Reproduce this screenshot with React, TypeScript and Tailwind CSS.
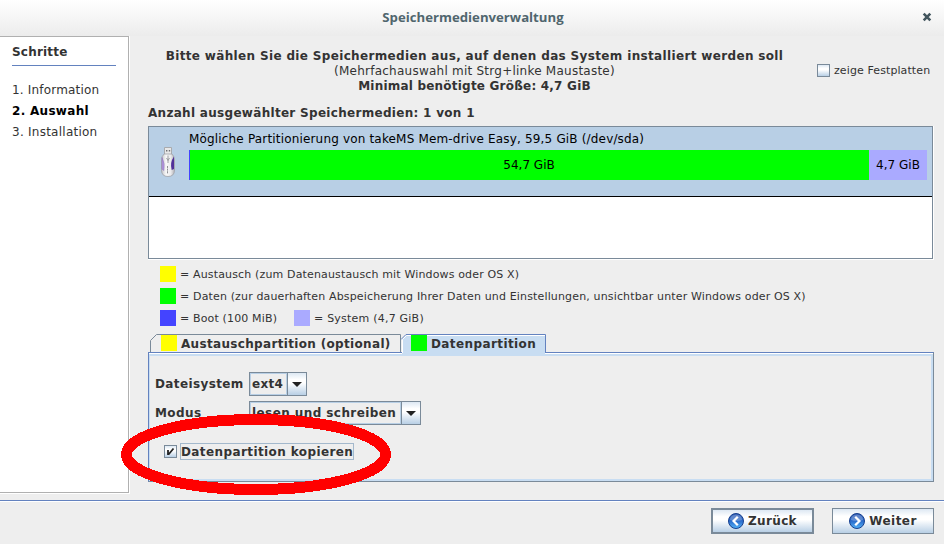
import React from 'react';

const metal = 'bg-[linear-gradient(to_bottom,#dde8f3_0%,#ffffff_30%,#ffffff_45%,#b8cfe5_100%)]';

function UsbStick() {
  return (
    <svg width="14" height="32" viewBox="0 0 14 32" className="shrink-0">
      <defs>
        <linearGradient id="usb" x1="0" x2="1" y1="0" y2="0">
          <stop offset="0" stopColor="#c4c4c9" />
          <stop offset="0.35" stopColor="#f8f8f8" />
          <stop offset="0.7" stopColor="#ececee" />
          <stop offset="1" stopColor="#b4b4ba" />
        </linearGradient>
      </defs>
      <path d="M3.500 1.500h7v8h-7z" fill="#e8e8e8" stroke="#a9abae" />
      <path d="M5 4h1.400v1.500H5zM7.800 4h1.400v1.500H7.800z" fill="#6e7074" />
      <path d="M3 8h8q2.500 2 2.500 7v9q0 6.500-6.500 6.500T.5 24v-9Q.5 10 3 8z" fill="url(#usb)" stroke="#a0a2a8" strokeWidth="0.8" />
      <path d="M1 11.500q3.200 6 1.800 13L1 23z" fill="#b79ae0" stroke="#8468b4" strokeWidth="0.5" />
      <path d="M13 10.500q-4.400 6-2.300 13.500L13 23z" fill="#51309a" />
      <path d="M7 9.500v7.500M5.500 12l1.500 2.500L8.500 12" fill="none" stroke="#96979c" strokeWidth="0.900" />
      <path d="M6.500 20v8" fill="none" stroke="#8f9095" strokeDasharray="2 .6" />
    </svg>
  );
}

function Arrow({ back }: { back?: boolean }) {
  return (
    <svg width="16" height="16" viewBox="0 0 16 16" className="shrink-0">
      <defs>
        <linearGradient id="ball" x1="0" x2="0" y1="0" y2="1">
          <stop offset="0" stopColor="#2c56ad" />
          <stop offset="0.5" stopColor="#2a6bcb" />
          <stop offset="1" stopColor="#55b4f8" />
        </linearGradient>
      </defs>
      <circle cx="8" cy="8" r="7.500" fill="url(#ball)" stroke="#17408f" />
      <path d="M2 7a6 5.500 0 0 1 12 0q-6 2-12 0z" fill="#ffffff" opacity="0.25" />
      <path d={back ? 'M9.800 3.800L5.600 8l4.200 4.200' : 'M6.200 3.800L10.400 8l-4.200 4.200'} fill="none" stroke="#fff" strokeWidth="2.300" />
    </svg>
  );
}

function Combo({ children, width, tracking }: { children: string; width: string; tracking: string }) {
  return (
    <div className={`flex h-6 border border-[#7a8a99] ${width}`}>
      <div className={`flex flex-1 items-center whitespace-nowrap border border-[#b8cfe5] pl-px ${tracking}`}>{children}</div>
      <div className={`flex w-[19px] items-center justify-center border-l border-[#7a8a99] ${metal}`}>
        <svg width="10" height="5" viewBox="0 0 10 5"><path d="M0 0h10L5 5z" fill="#222" /></svg>
      </div>
    </div>
  );
}

function Legend({ color, children }: { color: string; children: string }) {
  return (
    <div className="flex h-4 items-center gap-1 whitespace-nowrap">
      <span className={`size-4 ${color}`} />
      <span>{children}</span>
    </div>
  );
}

export default function App() {
  return (
    <div className="relative flex h-[544px] w-[944px] flex-col overflow-hidden bg-[#eeeeee] font-['DejaVu_Sans',sans-serif] text-[12px] leading-[15px] text-[#333333]">
      <header className="flex h-9 shrink-0 items-center bg-linear-to-b from-white to-[#ececec] pl-[24px] pr-3">
        <h1 className="flex-1 pb-px text-center font-['Open_Sans',sans-serif] text-[13.200px] font-bold text-[#50666e]">Speichermedienverwaltung</h1>
        <svg width="10" height="10" viewBox="0 0 10 10" className="mb-[2px]"><path d="M1.700 1.700l6.600 6.600M8.300 1.700L1.700 8.300" stroke="#43565e" strokeWidth="2.600" /></svg>
      </header>
      <div className="flex h-[458px] shrink-0">
        <aside className="w-[130px] border-b border-r border-white">
          <div className="h-[457px] border border-l-0 border-[#b0b0b0] bg-white pl-3 pr-3 pt-[8px]">
            <h2 className="h-[21px] border-b border-[#6382bf] font-bold tracking-[0.200px]">Schritte</h2>
            <ol className="mt-[14px] leading-[21px] tracking-[0.180px]">
              <li>1. Information</li>
              <li className="font-bold tracking-[0.300px] text-black">2. Auswahl</li>
              <li className="tracking-[0.250px]">3. Installation</li>
            </ol>
          </div>
        </aside>
        <main className="flex flex-1 flex-col pl-[18px] pr-[10px] pt-3">
          <div className="flex h-[45px]">
            <div className="w-[653px] whitespace-nowrap pt-px text-center">
              <p className="font-bold tracking-[0.345px]">Bitte wählen Sie die Speichermedien aus, auf denen das System installiert werden soll</p>
              <p className="tracking-[0.240px]">(Mehrfachauswahl mit Strg+linke Maustaste)</p>
              <p className="font-bold tracking-[0.210px]">Minimal benötigte Größe: 4,7 GiB</p>
            </div>
            <label className="ml-4 flex items-center gap-1 whitespace-nowrap text-[11px] tracking-[0.100px]">
              <span className={`size-[13px] border border-[#7a8a99] ${metal}`} />zeige Festplatten
            </label>
          </div>
          <p className="mt-[13px] font-bold tracking-[0.300px]">Anzahl ausgewählter Speichermedien: 1 von 1</p>
          <div className="mt-[5px] h-[134px] border-b border-r border-white">
            <div className="h-[133px] border border-[#7a8a99] bg-white">
              <div className="flex h-[70px] border-b border-black bg-[#b8cfe5] pl-3 pr-[5px] pt-[4px] text-black">
                <div className="pt-[15px]"><UsbStick /></div>
                <div className="ml-[14px] flex-1">
                  <p className="pt-px tracking-[0.170px]">Mögliche Partitionierung von takeMS Mem-drive Easy, 59,5 GiB (/dev/sda)</p>
                  <div className="mt-[3px] flex h-[30px] items-center text-center leading-[30px]">
                    <div className="flex-1 border-l border-[#4444ff] bg-[#00ff00] pr-px">54,7 GiB</div>
                    <div className="w-[58px] bg-[#aaaaff]">4,7 GiB</div>
                  </div>
                </div>
              </div>
            </div>
          </div>
          <div className="mt-[6px] flex flex-col gap-[6px] pl-3 text-[11px] tracking-[0.150px]">
            <Legend color="bg-[#ffff00]">= Austausch (zum Datenaustausch mit Windows oder OS X)</Legend>
            <Legend color="bg-[#00ff00]">= Daten (zur dauerhaften Abspeicherung Ihrer Daten und Einstellungen, unsichtbar unter Windows oder OS X)</Legend>
            <div className="flex">
              <div className="w-[134px]"><Legend color="bg-[#4444ff]">= Boot (100 MiB)</Legend></div>
              <div className="tracking-[0.220px]"><Legend color="bg-[#aaaaff]">= System (4,7 GiB)</Legend></div>
            </div>
          </div>
          <div className="relative z-10 mt-2 flex h-[22px] shrink-0 pl-[2px] font-bold">
            <div className="relative flex h-[18px] w-[251px] gap-1 pl-[11px] pt-px">
              <svg className="absolute left-0 top-0" width="251" height="18"><path d="M.5 18V6.500l6-6H250.500V18" fill="none" stroke="#7a8a99" /></svg>
              <span className="size-4 bg-[#ffff00]" /><span className="whitespace-nowrap pt-[2px] tracking-[0.330px]">Austauschpartition (optional)</span>
            </div>
            <div className="relative flex h-[22px] w-[145px] gap-1 pl-[10px] pt-px">
              <svg className="absolute left-0 top-0" width="145" height="22"><path d="M1 22V5.500L5.500 1H144v21z" fill="#c8ddf2" /><path d="M1.500 19V5.500L5.500 1.500H144" fill="none" stroke="#fff" /><path d="M0 5.500L5 .5h139.500V18" fill="none" stroke="#6382bf" /></svg>
              <span className="relative size-4 bg-[#00ff00]" /><span className="relative whitespace-nowrap pt-[2px] tracking-[0.400px]">Datenpartition</span>
            </div>
          </div>
          <section className="-mt-1 h-[130px] shrink-0 border border-b-[#7a8a99] border-l-[#6382bf] border-r-[#7a8a99] border-t-[#6382bf] font-bold">
            <div className="h-full border-t border-white">
              <div className="flex h-full flex-col border-2 border-l border-[#c8ddf2] pl-[5px] pt-4">
                <div className="flex h-6 items-center"><span className="w-[94px] tracking-[0.380px]">Dateisystem</span><Combo width="w-[58px]" tracking="tracking-[0.300px]">ext4</Combo></div>
                <div className="mt-[5px] flex h-6 items-center"><span className="w-[94px] tracking-[0.400px]">Modus</span><Combo width="w-[172px]" tracking="tracking-[0.420px]">lesen und schreiben</Combo></div>
                <label className="ml-[9px] mt-[18px] flex h-[17px] items-center gap-[3px]">
                  <span className={`size-[13px] border border-[#7a8a99] ${metal}`}>
                    <svg width="11" height="11" viewBox="0 0 11 11"><path d="M3 4v5M3.500 8.500L8.500 2.500" fill="none" stroke="#222" strokeWidth="1.800" /></svg>
                  </span>
                  <span className="h-[17px] w-[174px] whitespace-nowrap border border-[#a3b8cc] pt-px tracking-[0.400px]">Datenpartition kopieren</span>
                </label>
              </div>
            </div>
          </section>
        </main>
      </div>
      <footer className="mt-[6px] flex h-11 items-start justify-end gap-[18px] border-t border-[#6382bf] pr-[10px] font-bold shadow-[inset_0_1px_0_#ffffff]">
        <button className={`mt-[7px] flex h-[26px] w-[103px] items-center justify-center gap-1 border-2 border-[#7a8a99] tracking-[0.350px] ${metal}`}><Arrow back />Zurück</button>
        <button className={`mt-[7px] flex h-[26px] w-[102px] items-center justify-center gap-1 border border-[#7a8a99] tracking-[0.450px] ${metal}`}><Arrow />Weiter</button>
      </footer>
      <svg className="pointer-events-none absolute left-0 top-0 z-20" width="944" height="544" shapeRendering="crispEdges">
        <ellipse cx="256" cy="454.500" rx="129.500" ry="35" fill="none" stroke="#ff0000" strokeWidth="11" />
      </svg>
    </div>
  );
}
